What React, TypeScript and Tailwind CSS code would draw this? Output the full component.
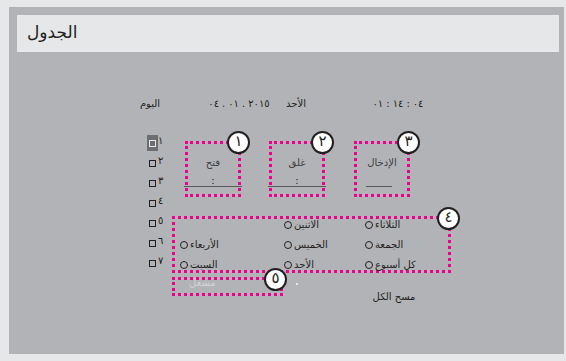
import React from "react";

const Circle = ({ n, className }: { n: string; className: string }) => (
  <div
    className={
      "absolute z-10 w-[23px] h-[23px] rounded-full bg-white border-2 border-[#231f20] flex items-center justify-center text-[15px] leading-none text-[#231f20] " +
      className
    }
  >
    <span className="-mt-[2px]">{n}</span>
  </div>
);

const Radio = ({ label }: { label: string }) => (
  <div className="flex items-center gap-[2px]">
    <span className="w-[8px] h-[8px] rounded-full border-[1.5px] border-[#231f20] shrink-0" />
    <span className="text-[10px] leading-[12px] text-[#231f20]">{label}</span>
  </div>
);

const Seq = ({ parts, className }: { parts: string[]; className: string }) => (
  <div dir="ltr" className={"flex justify-center gap-[3px] " + className}>
    {parts.map((p, i) => (
      <span key={i}>{p}</span>
    ))}
  </div>
);

export default function App() {
  const rows = ["١", "٢", "٣", "٤", "٥", "٦", "٧"];
  return (
    <div className="w-[566px] h-[361px] bg-[#e6e7e8] pt-[7px] pl-[9px] font-['DejaVu_Sans',sans-serif]">
      <div className="w-[555px] h-[347px] bg-[#b1b3b6] pt-[8px] pl-[8px]">
        <div className="w-[542px] h-[37px] bg-[#e6e7e8] flex items-center pl-[10px] text-[17px] text-[#231f20]">
          <span className="-mt-[1px]">الجدول</span>
        </div>

        {/* date row */}
        <div className="flex mt-[45px] text-[10px] leading-[14px] text-[#231f20]">
          <div className="w-[30px] ml-[118px] text-center">اليوم</div>
          <Seq parts={["٠٤", ".", "٠١", ".", "٢٠١٥"]} className="w-[64px] ml-[42px]" />
          <div className="w-[30px] ml-[10px] text-center">الأحد</div>
          <Seq parts={["٠١", ":", "١٤", ":", "٠٤"]} className="w-[64px] ml-[55px]" />
        </div>

        {/* main */}
        <div className="flex mt-[22px]">
          {/* checkbox column */}
          <div className="ml-[130px] w-[25px] flex flex-col">
            {rows.map((r, i) => (
              <div key={r} className="h-[20px] flex items-center">
                <div
                  className={
                    "w-[11px] h-[16px] flex items-center justify-center " +
                    (i === 0 ? "bg-[#6d6e71]" : "")
                  }
                >
                  <span
                    className={
                      "w-[7px] h-[7px] border " +
                      (i === 0 ? "border-[#e6e7e8]" : "border-[#231f20]")
                    }
                  />
                </div>
                <span className="text-[10px] leading-none -mt-[5px] text-[#231f20]">{r}</span>
              </div>
            ))}
          </div>

          {/* right area */}
          <div className="flex flex-col">
            <div className="flex mt-[8px]">
              <div className="relative ml-[13px] w-[56px] h-[56px] border-[3px] border-dotted border-[#ec008c] flex flex-col items-center">
                <Circle n="١" className="right-[-12px] top-[-13px]" />
                <span className="mt-[13px] text-[10px] leading-[12px] text-[#414042]">فتح</span>
                <div className="mt-[8px] w-[58px] h-[10px] border-b border-[#58595b] flex justify-center items-end text-[10px] leading-[10px] text-[#231f20]">
                  :
                </div>
              </div>
              <div className="relative ml-[28px] w-[56px] h-[56px] border-[3px] border-dotted border-[#ec008c] flex flex-col items-center">
                <Circle n="٢" className="right-[-12px] top-[-13px]" />
                <span className="mt-[13px] text-[10px] leading-[12px] text-[#414042]">غلق</span>
                <div className="mt-[8px] w-[58px] h-[10px] border-b border-[#58595b] flex justify-center items-end text-[10px] leading-[10px] text-[#231f20]">
                  :
                </div>
              </div>
              <div className="relative ml-[29px] w-[56px] h-[56px] border-[3px] border-dotted border-[#ec008c] flex flex-col items-center">
                <Circle n="٣" className="right-[-13px] top-[-13px]" />
                <span className="mt-[13px] text-[10px] leading-[12px] text-[#414042]">الإدخال</span>
                <div className="mt-[17px] w-[26px] h-px bg-[#58595b] -ml-[6px]" />
              </div>
            </div>

            <div className="relative mt-[19px] w-[279px] h-[57px] border-[3px] border-dotted border-[#ec008c]">
              <Circle n="٤" className="right-[-12px] top-[-12px]" />
              <div className="-mt-[4px] pl-[5px] grid grid-cols-[104px_81px_auto] grid-rows-[20px_20px_20px] items-center">
                <div />
                <Radio label="الاثنين" />
                <Radio label="الثلاثاء" />
                <Radio label="الأربعاء" />
                <Radio label="الخميس" />
                <Radio label="الجمعة" />
                <Radio label="السبت" />
                <Radio label="الأحد" />
                <Radio label="كل أسبوع" />
              </div>
            </div>

            <div className="flex items-start mt-[4px]">
              <div className="relative w-[111px] h-[19px] border-[3px] border-dotted border-[#ec008c]">
                <Circle n="٥" className="right-[-7px] top-[-12px]" />
                <div className="ml-[14px] text-[10px] leading-[12px] text-[#d1d3d4] -mt-[3px]">
                  مشغل
                </div>
              </div>
              <span className="ml-[13px] mt-[6px] w-[2px] h-[2px] bg-[#e6e7e8]" />
              <div className="ml-[71px] mt-[14px] w-[50px] text-center text-[10px] leading-[12px] text-[#231f20]">
                مسح الكل
              </div>
            </div>
          </div>
        </div>
      </div>
    </div>
  );
}
